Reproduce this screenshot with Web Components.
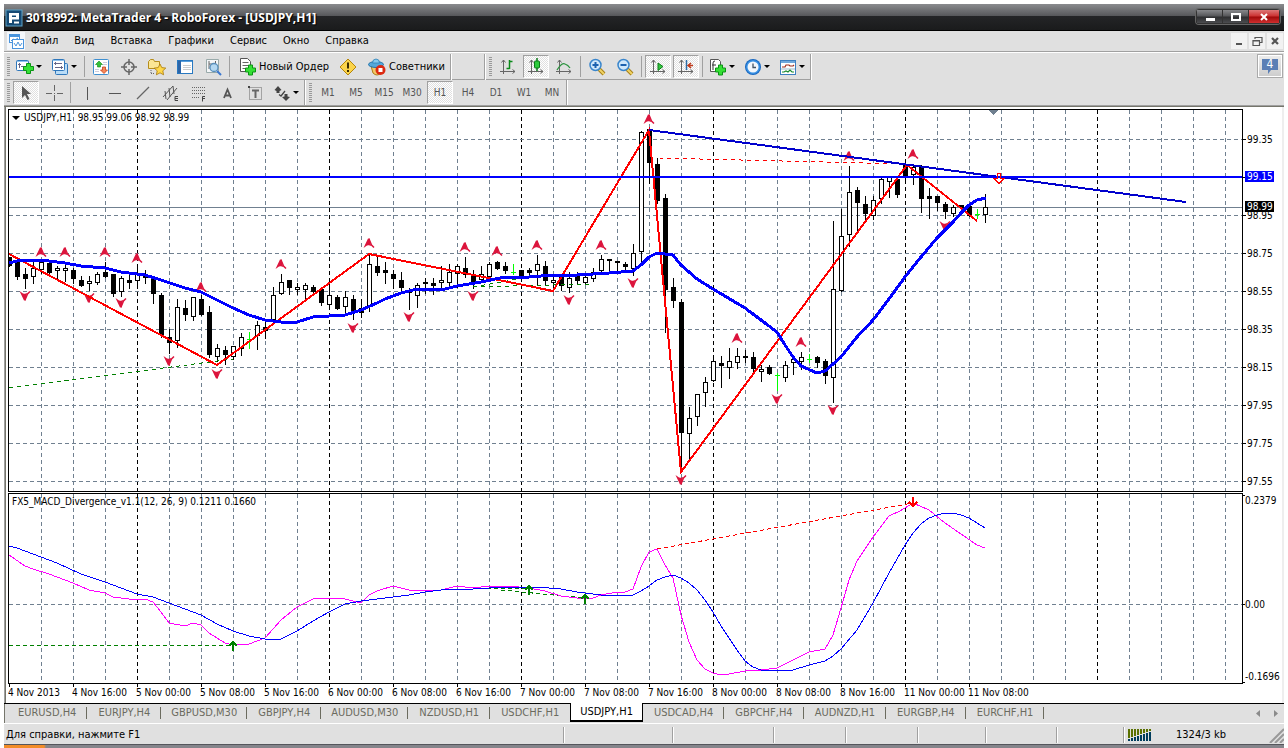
<!DOCTYPE html>
<html lang="ru">
<head>
<meta charset="utf-8">
<title>3018992: MetaTrader 4 - RoboForex - [USDJPY,H1]</title>
<style>
  html, body { margin: 0; height: 100%; background: #fff; }
  body { font: 11px/14px "DejaVu Sans Condensed", "DejaVu Sans", Tahoma, sans-serif; color: #000; }
</style>
</head>
<body>
<mt-window>
  <mt-titlebar slot="title">3018992: MetaTrader 4 - RoboForex - [USDJPY,H1]</mt-titlebar>
  <mt-menubar slot="menu"></mt-menubar>
  <mt-toolbars slot="tools"></mt-toolbars>
  <mt-chart slot="chart"></mt-chart>
  <mt-tabs slot="tabs"></mt-tabs>
  <mt-status slot="status">Для справки, нажмите F1</mt-status>
</mt-window>

<script>
const define = (name, render, ready) => customElements.define(name, class extends HTMLElement {
  connectedCallback() {
    if (this.shadowRoot) return;
    const root = this.attachShadow({ mode: 'open' });
    root.innerHTML = render(this);
    if (ready) ready(root, this);
  }
});

const BTN = `button { font: inherit; color: inherit; background: none; border: 0; padding: 0; margin: 0; box-sizing: border-box; }`;

/* ---------- icons, 18x18 ---------- */
const plus = (x, y) => `<path d="M${x + 3} ${y}h4v3h3v4h-3v3h-4v-3h-3v-4h3z" fill="#35e035" stroke="#0a9414"/>`;
const axes = `<path d="M4.500 2v14M1 13.500h15M2.500 4.500l2-2.500 2 2.500M13.500 11.500l2.500 2-2.500 2" fill="none" stroke="#666"/>`;
const lens = s => `<path d="M11 11l5 5" stroke="#a8821a" stroke-width="4"/><path d="M11 11l5 5" stroke="#f0d264" stroke-width="2"/>
  <circle cx="7.500" cy="7" r="5.500" fill="#cfe8fb" stroke="#3a86cc" stroke-width="1.500"/><path d="${s}" stroke="#1c62b0" stroke-width="2"/>`;
const ICONS = {
  app: `<rect x="1" y="1" width="16" height="16" fill="#164a74" stroke="#5fa3c8"/><path d="M4 4h10v6.500H7V14H4z" fill="#fff"/><path d="M7 6.500h4v1.500H7z" fill="#164a74"/><path d="M9 13.500h5" stroke="#fff" stroke-width="2"/>`,
  doc: `<rect width="18" height="18" fill="#f4f7fb"/><rect x="2.500" y="2.500" width="10" height="8" fill="#fff" stroke="#4a94dc"/><path d="M3 4h10" stroke="#4a94dc" stroke-width="2"/><path d="M4 9l2-2 2 1 3-2" fill="none" stroke="#4a94dc"/><rect x="5.500" y="7.500" width="11" height="9" fill="#fff" stroke="#4a94dc"/><path d="M7 11l2 3 2-4 2 4 2-3" fill="none" stroke="#4a94dc"/>`,
  newchart: `<rect x=".5" y="2.500" width="12" height="10" rx="1" fill="#fff" stroke="#2f77bb"/><path d="M1 3.500h11" stroke="#8fc1ec"/><path d="M3.500 5v5M2 6.500h3M5 8.500h5" stroke="#668"/>${plus(7.500, 5.500)}`,
  profiles: `<rect x="4.500" y="5.500" width="12" height="11" rx="1" fill="#b9dcf7" stroke="#2f77bb"/><rect x="1.500" y="1.500" width="12" height="11" rx="1" fill="#fff" stroke="#2f77bb"/><path d="M2 2.500h11" stroke="#8fc1ec"/><path d="M4.500 4v3M3 5.500h8M10.500 8v3M4 9.500h8" stroke="#668" fill="none"/>`,
  market: `<rect x="1.500" y="1.500" width="15" height="15" rx="1" fill="#fff" stroke="#3f8fd0"/><path d="M11 4.500h4M11 6.500h4M3 11.500h4M3 13.500h4" stroke="#ccd"/><path d="M7 3l3.500 3.500H8.500V9h-3V6.500H3.500z" fill="#35c03a" stroke="#0c8a14" stroke-width=".6"/><path d="M12 15.500l-3.500-3.500h2V9h3v3h2z" fill="#f58a5a" stroke="#c8401a" stroke-width=".8"/>`,
  cross: `<circle cx="9" cy="9" r="5" fill="none" stroke="#666" stroke-width="1.500"/><path d="M9 1v6M9 11v6M1 9h6M11 9h6" stroke="#666" stroke-width="1.500"/>`,
  favs: `<path d="M.5 3.500l2-2h3l1 2h5v7H.5z" fill="#fbe694" stroke="#b58d1c"/><path d="M3 12v4M3 15.500h3" stroke="#666" stroke-dasharray="1 1" fill="none"/><path d="M12 6l1.800 3.600 4 .5-3 2.700.8 4-3.600-2-3.600 2 .8-4-3-2.700 4-.5z" fill="#ffd84a" stroke="#a87808" stroke-width=".8"/>`,
  navigator: `<rect x="1.500" y="2.500" width="15" height="13" fill="#fff" stroke="#2878c0"/><path d="M2 3.500h14" stroke="#5aa0dc"/><rect x="2" y="3" width="3" height="12" fill="#2c65a8"/><path d="M7 7.500h8M7 9.500h8M7 11.500h8" stroke="#ccc"/>`,
  tester: `<path d="M2.500 1.500h12v13h-12z" fill="#f4f6f8" stroke="#9aa"/><path d="M5 3v8M11.500 3v5M5 6h6" stroke="#666"/><circle cx="10" cy="9.500" r="4" fill="#b4d8f2" stroke="#5a90bc" stroke-width="1.300"/><path d="M13 13l4 4" stroke="#3c78d0" stroke-width="2"/>`,
  order: `<path d="M2.500 .500h7l3 3v10h-10z" fill="#fff" stroke="#555"/><path d="M4.500 4.500h6M4.500 7.500h6M4.500 10.500h3" stroke="#666"/>${plus(7.500, 7)}`,
  warn: `<path d="M9 1l8 8-8 8-8-8z" fill="#fbd44a" stroke="#b5860c"/><path d="M9 4.500v6M9 12v2" stroke="#3c2c00" stroke-width="2"/>`,
  experts: `<path d="M3 8h12l-2 7q-4 4-8 0z" fill="#f3c766" stroke="#ad7d18"/><ellipse cx="8" cy="6.500" rx="7.500" ry="3" fill="#55a8da" stroke="#2372a8"/><path d="M4.500 5q0-4 3.500-4t3.500 4z" fill="#86caee" stroke="#2f80b5" stroke-width=".8"/><circle cx="12.500" cy="12" r="5" fill="#dc2a12"/><rect x="10.500" y="10" width="4" height="4" fill="#fff"/>`,
  bars: `${axes}<path d="M10.500 2v9M7.500 10.500h3M10.500 3.500h3" stroke="#0b8a1a" stroke-width="1.500"/>`,
  candles: `${axes}<path d="M10 0v13" stroke="#0b7a18" stroke-width="1.500"/><rect x="7.500" y="3" width="5" height="7" rx="1" fill="#2dcc3c" stroke="#0b7a18"/>`,
  line: `${axes}<path d="M2 12q5-8 8-6 3 1 5 4" fill="none" stroke="#2d9440" stroke-width="1.300"/>`,
  zoomin: lens('M4.500 7h6M7.500 4v6'),
  zoomout: lens('M4.500 7h6'),
  scroll: `${axes}<path d="M9 5l5 3.500-5 4z" fill="#34c840" stroke="#0b7a18"/>`,
  shift: `${axes}<path d="M9.500 2v10" stroke="#2b6ca8" stroke-width="1.500"/><path d="M16 7.500h-4M14 5l-3 2.500 3 2.500" fill="none" stroke="#c0391b" stroke-width="1.500"/>`,
  indicator: `<path d="M1.500 1.500h8l2 2v10h-10z" fill="#fff" stroke="#555"/><path d="M4 12V5q0-2 2-2M3 7h4" stroke="#333" fill="none"/>${plus(6.500, 7)}`,
  clock: `<circle cx="9" cy="9" r="8" fill="#1767c0"/><circle cx="9" cy="9" r="7" fill="#3a92e4"/><circle cx="9" cy="9" r="5.500" fill="#f2f7fc"/><path d="M9 5.500V9.500h3" fill="none" stroke="#456" stroke-width="1.300"/>`,
  template: `<rect x="1.500" y="2.500" width="15" height="14" fill="#fff" stroke="#3d7fc0"/><path d="M2 4h14" stroke="#6ea8dc" stroke-width="2"/><path d="M3 9h3l1-2h3l1 1h3l1-1" fill="none" stroke="#a03020" stroke-width="1.200"/><path d="M2 11h14" stroke="#9bc"/><path d="M3 14h2l2-1 2 1 2-2 2 2h2" fill="none" stroke="#1c8c30" stroke-width="1.200"/>`,
  cursor: `<path d="M5 2v12l3-3 2.500 5 2-1-2.500-5h4z" fill="#555"/>`,
  thin: `<path d="M9.500 1v6M9.500 11v6M1 9.500h6M12 9.500h6" stroke="#666"/><path d="M9 9h1v1h-1z" fill="#666"/>`,
  vline: `<path d="M9.500 3v13" stroke="#555"/>`,
  hline: `<path d="M3 9.500h12" stroke="#555"/>`,
  tline: `<path d="M3 15L15 3" stroke="#666" stroke-width="1.300"/>`,
  channel: `<path d="M1 13L11 2M5 16L15 4M3 7l1 8M7 4l1 9M11 2l1 8" fill="none" stroke="#555"/><path d="M16 12.500h-3v4h3M13 14.500h3" fill="none" stroke="#444"/>`,
  fibo: `<path d="M2 3.500h14M2 6.500h14M2 9.500h14M2 13.500h8" stroke="#666" stroke-dasharray="1 1"/><path d="M15 12.500h-2.500v5M12 14.500h3" fill="none" stroke="#444"/>`,
  letter: `<path d="M6 14l3.500-8.500 3.500 8.500M7.500 11.500h4" fill="none" stroke="#555" stroke-width="1.800"/>`,
  label: `<rect x="3.500" y="3.500" width="12" height="12" fill="none" stroke="#666" stroke-dasharray="1 1"/><path d="M6 6.500h7M9.500 6v8" stroke="#666" stroke-width="2"/><path d="M2 2h2v2H2z" fill="#444"/>`,
  arrows: `<path d="M5 2l3.500 4L6.500 7v2h-3V7L1.500 6z" fill="#444"/><path d="M6 10.500l2 1.500 4-5" fill="none" stroke="#444" stroke-width="1.300"/><path d="M13 17l-4-4 2.500-.5V10h3v2.500L17 13z" fill="#444"/>`,
  chat: `<path d="M1 2h16v11H10l-3 4v-4H1z" fill="#5b7fb5"/>`
};
const icon = n => `<svg width="18" height="18" viewBox="0 0 18 18" aria-hidden="true">${ICONS[n]}</svg>`;

/* ---------- window frame ---------- */
define('mt-window', () => `
<style>
  :host { display: flex; flex-direction: column; min-height: 100vh; box-sizing: border-box; padding: 4px 4px 0; }
  .tools { border-bottom: 1px solid #75756b; }
  .chart { flex: 1; display: flex; min-height: 0; }
  .desk { height: 3px; background: linear-gradient(90deg, #f28c28 40px, #85858b 42px); border-top: 1px solid #55565c; }
  ::slotted(mt-chart) { flex: 1; }
</style>
<slot name="title"></slot><slot name="menu"></slot>
<div class="tools"><slot name="tools"></slot></div>
<div class="chart"><slot name="chart"></slot></div>
<slot name="tabs"></slot><slot name="status"></slot><div class="desk"></div>`);

define('mt-titlebar', () => `
<style>
  ${BTN}
  :host { display: flex; align-items: center; height: 27px; box-sizing: border-box; padding: 0 4px 0 1px;
    background: linear-gradient(#8a8b8e 0, #56575a 12px, #242527 12px, #1a1b1c 26px, #000 26px); color: #fff;
    font: bold 12px/16px "Open Sans", "Noto Sans", sans-serif; }
  svg { flex: none; }
  h1 { flex: 1; margin: 0 0 0 3px; font: inherit; text-shadow: 1px 1px 1px #000; white-space: nowrap; }
  .ctl { display: flex; border: 1px solid #333; border-radius: 3px; box-shadow: 0 0 0 1px #666; margin-bottom: 2px; }
  .ctl button { width: 26px; height: 13px; border-right: 1px solid #333; background: linear-gradient(#88898c, #56575a 6px, #2d2e30 7px, #4c4d50); display: grid; place-items: center; }
  .ctl .x { width: 30px; border: 0; background: linear-gradient(#d77, #c33 6px, #a00a0a 7px, #d03030); }
</style>
${icon('app')}<h1><slot></slot></h1>
<div class="ctl">
 <button aria-label="Свернуть"><svg width="12" height="10"><path d="M2 7.500h9" stroke="#fff" stroke-width="3"/></svg></button>
 <button aria-label="Развернуть"><svg width="12" height="10"><path d="M2 2h8v6H2z" fill="none" stroke="#fff" stroke-width="2"/></svg></button>
 <button class="x" aria-label="Закрыть"><svg width="12" height="10"><path d="M3 2l6 6M9 2l-6 6" stroke="#fff" stroke-width="2"/></svg></button>
</div>`);

define('mt-menubar', () => `
<style>
  ${BTN}
  :host { display: flex; align-items: center; height: 20px; background: #e0e0e0; padding: 0 1px 0 3px; }
  nav { display: flex; flex: 1; gap: 16px; margin-left: 6px; }
  .mdi { display: flex; gap: 2px; }
  .mdi button { width: 16px; height: 16px; background: #f2f2f2; display: grid; place-items: center; }
</style>
${icon('doc')}
<nav>${['Файл', 'Вид', 'Вставка', 'Графики', 'Сервис', 'Окно', 'Справка'].map(t => `<button>${t}</button>`).join('')}</nav>
<div class="mdi">
 <button aria-label="Свернуть график"><svg width="12" height="12"><path d="M3 9h6" stroke="#555" stroke-width="2"/></svg></button>
 <button aria-label="Восстановить график"><svg width="12" height="12"><path d="M4 4V2.500h7v5H9M2 5.500h6.500v5H2zM2 6h6" fill="none" stroke="#555" stroke-width="1.200"/></svg></button>
 <button aria-label="Закрыть график"><svg width="12" height="12"><path d="M3 3l6 6M9 3l-6 6" stroke="#555" stroke-width="2.200"/></svg></button>
</div>`);

/* ---------- toolbars ---------- */
define('mt-tool', el => {
  const n = el.getAttribute('icon');
  return `
<style>
  ${BTN}
  :host { display: flex; width: 28px; height: 25px; padding: 1px; box-sizing: border-box; color: #000; }
  :host([tf]) { color: #555; font-size: 10px; }
  :host([menu]) { width: 35px; }
  :host([size="order"]) { width: 102px; }
  :host([size="expert"]) { width: 88px; }
  button { flex: 1; min-width: 0; display: flex; align-items: center; justify-content: center; white-space: nowrap; border: 1px solid transparent; }
  :host([menu]) button { justify-content: flex-start; padding-left: 2px; }
  :host([size]) button { justify-content: flex-start; padding-left: 4px; gap: 3px; }
  :host([on]) button { border-color: #a0a0a0 #fff #fff #a0a0a0; background: repeating-conic-gradient(#fff 0 25%, #e0e0e0 0 50%) 0 0 / 2px 2px; }
  svg { flex: none; }
  i { margin-left: 2px; border: 3px solid transparent; border-top-color: #000; border-bottom: 0; }
</style>
<button aria-label="${el.getAttribute('label') || n || el.textContent}">${n ? icon(n) : ''}<slot></slot>${el.hasAttribute('menu') ? '<i></i>' : ''}</button>`;
});

const tools = s => s.split(' ').map(t => {
  if (t === '|') return '<b></b>';
  const on = t.endsWith('*'), menu = t.endsWith('+');
  return `<mt-tool icon="${t.replace(/[*+]/, '')}"${on ? ' on' : ''}${menu ? ' menu' : ''}></mt-tool>`;
}).join('');

define('mt-toolbars', () => `
<style>
  ${BTN}
  :host { display: grid; grid-template-columns: 1fr auto; background: #e0e0e0; border-top: 1px solid #a0a0a0; border-bottom: 1px solid #a0a0a0; box-shadow: inset 0 1px #fff; padding-top: 2px; }
  .rows { display: flex; flex-direction: column; }
  .row { display: flex; height: 26px; }
  .row + .row { height: 25px; }
  .group { display: flex; box-sizing: border-box; border-right: 1px solid #a0a0a0; box-shadow: 1px 0 #fff; margin-right: 1px; }
  .lined { border-bottom: 1px solid #a0a0a0; }
  .rest { width: 33px; }
  .group::before { content: ""; width: 3px; margin: 3px 2px 3px 3px; background: repeating-linear-gradient(#999 0 1px, #e0e0e0 1px 2px); }
  .rest::before { display: none; }
  b { width: 1px; margin: 2px 2px; background: #a0a0a0; }
  .chat { position: relative; width: 26px; height: 24px; margin: 0 1px; border: 1px solid #aaa; outline: 1px solid #fff; outline-offset: -2px; background: linear-gradient(#eee, #ccc); display: grid; place-items: center; }
  .chat span { position: absolute; top: 2px; color: #fff; font: 12px/14px "DejaVu Sans Condensed", sans-serif; }
</style>
<div class="rows">
 <div class="row">
  <div class="group lined">${tools('newchart+ profiles+ | market cross favs navigator tester |')}<mt-tool icon="order" size="order" label="Новый Ордер">Новый Ордер</mt-tool><mt-tool icon="warn"></mt-tool><mt-tool icon="experts" size="expert" label="Советники">Советники</mt-tool></div>
  <div class="group lined rest"></div>
  <div class="group lined">${tools('bars candles* line | zoomin zoomout | scroll* shift* | indicator+ clock+ template+')}</div>
 </div>
 <div class="row">
  <div class="group">${tools('cursor* thin | vline hline tline channel fibo letter label arrows+')}</div>
  <div class="group">${['M1', 'M5', 'M15', 'M30', 'H1', 'H4', 'D1', 'W1', 'MN'].map(t => `<mt-tool tf${t === 'H1' ? ' on' : ''}>${t}</mt-tool>`).join('')}</div>
 </div>
</div>
<button class="chat" aria-label="Сообщения">${icon('chat')}<span>4</span></button>`);

/* ---------- chart data: y pixels of high, body top, body bottom, low; kind ---------- */
const CANDLES = `257 257 266 266 f|260 261 277 279 f|268 274 279 288 f|262 268 277 283 h|260 262 270 273 h|262 263 273 274 f|266 268 271 280 h|265 268 271 281 h|268 270 279 283 f|276 280 286 286 f|276 281 284 290 h|272 274 283 284 h|262 272 277 277 f|274 274 294 296 f|276 278 292 296 h|275 280 283 288 f|265 274 281 285 h|270 276 277 283 f|277 277 294 303 f|293 295 335 337 f|329 337 343 353 f|299 307 341 347 h|300 308 315 320 f|297 297 317 320 h|295 299 315 315 f|306 312 355 357 f|344 348 357 361 h|346 350 355 364 f|346 346 357 359 h|333 337 349 355 h|332 339 339 349 g|321 325 336 349 h|319 327 331 338 f|287 295 320 321 h|274 282 294 294 h|280 280 288 294 f|283 287 290 294 h|283 285 290 298 h|285 287 292 293 f|287 289 303 305 f|283 295 305 305 h|295 297 309 309 f|291 297 307 315 h|295 299 311 319 f|299 308 313 317 f|255 264 306 311 h|257 266 273 275 f|262 270 273 283 f|270 274 279 288 f|272 280 288 290 f|288 291 293 309 f|283 285 296 307 h|278 282 284 293 f|278 283 286 294 f|266 280 283 288 h|264 272 283 286 h|264 266 274 287 h|257 268 275 277 f|270 274 283 288 f|266 274 280 281 h|262 264 277 277 h|261 262 269 269 f|262 266 271 273 f|264 272 272 275 g|270 270 276 276 f|268 270 273 277 f|255 264 271 284 h|261 266 281 285 f|277 280 283 291 h|276 277 286 290 f|272 278 288 292 h|272 274 281 283 f|274 277 283 284 h|268 272 279 281 h|255 259 271 273 h|259 259 261 272 h|261 261 263 273 f|262 264 267 272 f|244 253 269 275 h|131 132 252 262 h|129 129 163 183 f|158 164 201 203 f|194 198 290 332 f|278 287 301 307 f|299 302 433 470 f|407 418 434 458 h|394 394 417 425 h|377 382 393 406 h|355 361 381 381 h|356 363 366 387 f|348 361 368 378 h|348 356 363 368 h|350 356 358 362 f|352 357 369 372 f|365 369 372 381 h|365 367 374 374 f|373 375 375 391 g|361 365 378 381 h|355 359 363 374 h|352 357 362 369 h|354 359 359 363 g|356 357 363 367 f|359 361 376 383 f|221 289 378 402 h|209 236 291 291 h|166 192 235 246 h|187 190 203 230 f|196 204 214 219 f|196 200 216 219 h|178 179 199 203 h|177 177 182 197 h|179 179 195 197 f|162 164 176 179 f|165 167 175 184 h|165 167 199 212 f|188 196 199 218 f|196 196 203 210 f|202 204 212 218 f|205 207 214 216 h|205 205 208 209 f|205 206 216 216 f|209 214 214 219 g|194 207 215 222 h`;

const candles = CANDLES.split('|').map((c, k) => {
  const [h, t, b, l, kind] = c.split(' '), x = 9 + 8 * k;
  const H = +h, T = +t, B = +b, L = +l;
  if (kind === 'g') return `<path d="M${x}.500 ${H}V${L}M${x - 2} ${T}.500h5" stroke="#0f0"/>`;
  return `<path d="M${x}.500 ${H}V${L + 1}" stroke="#000"/><rect x="${x - 1.5}" y="${T + .5}" width="4" height="${Math.max(B - T - 1, 1)}" fill="${kind === 'h' ? '#fff' : '#000'}" stroke="#000"/>`;
}).join('');

const UP = '41,252 65,252 105,252 137,258 201,287 281,264 369,243 465,247 497,251 537,245 601,245 649,119 737,338 801,342 849,156 913,154';
const DOWN = '25,296 89,298 121,303 169,361 217,374 353,328 409,317 473,296 569,300 633,283 681,480 777,399 833,410 945,226';
const fractal = (p, dir) => {
  const [x, y] = p.split(',');
  return `<g transform="translate(${x} ${y}) scale(1 ${dir})" shape-rendering="auto"><path d="M-5.500 5L-1-4.500H1V2L-2 2.500Z" fill="#dc143c"/><path d="M0-4L2.500 2L5 4.500M.500 2H2.500" fill="none" stroke="#dc143c" stroke-width="1.500"/></g>`;
};
const fractals = UP.split(' ').map(p => fractal(p, 1)).join('') + DOWN.split(' ').map(p => fractal(p, -1)).join('');

const vgrid = (y1, y2) => {
  let s = '';
  for (let x = 41; x < 1240; x += 32) s += `<path d="M${x}.500 ${y1}V${y2}" stroke="${(x - 137) % 192 ? '#708090' : '#000'}" stroke-dasharray="4 3"/>`;
  return s;
};
let hgrid = '';
for (let y = 139; y < 490; y += 38) hgrid += `<path d="M9 ${y}.500H1242" stroke="#708090" stroke-dasharray="4 3"/>`;

const MA = '9,263 21,260 41,260 65,263 81,266 105,268 121,272 145,275 161,280 185,288 201,292 217,300 233,308 249,315 265,320 281,322 297,322 313,317 329,316 345,315 361,310 377,303 385,299 401,293 417,289 445,289 457,286 481,282 505,277 529,277 553,275 577,275 609,273 633,271 641,265 649,257 657,253 673,255 681,265 697,279 713,289 745,308 769,326 777,332 785,345 793,357 801,366 817,373 825,371 841,357 857,337 873,320 889,299 905,277 921,257 937,238 953,222 961,213 969,205 977,200 986,198';
const MACD = '9,555 25,566 33,569 49,574 73,583 89,590 105,593 113,597 129,599 145,599 153,602 161,612 169,623 185,626 193,623 201,625 209,633 225,643 233,645 249,644 265,638 281,620 297,607 313,599 329,598 345,599 361,603 369,595 377,591 393,586 409,590 441,590 457,586 473,588 489,586 509,586 529,588 545,591 561,596 577,598 593,598 601,595 617,592 625,592 633,589 641,567 649,552 657,549 665,565 673,578 681,615 689,642 697,660 705,669 713,673 721,675 729,674 745,671 761,670 777,668 793,660 809,652 825,649 833,635 841,608 849,580 857,561 873,537 889,516 900,511 913,503 929,510 945,523 961,534 977,545 985,548';
const SIGNAL = '9,546 17,548 57,563 81,574 105,582 121,588 137,594 153,597 169,603 201,615 217,624 233,631 249,636 265,639 281,639 297,631 313,621 329,612 345,604 361,601 377,599 409,595 425,592 441,590 473,589 505,587 537,587 561,589 577,592 601,595 633,595 641,591 649,586 657,580 665,577 673,575 681,578 689,583 697,590 705,600 713,612 721,626 729,638 737,650 745,661 753,667 761,670 777,671 793,670 809,665 825,661 833,656 841,649 857,630 873,603 889,573 905,545 913,533 921,524 929,518 937,515 945,513 953,513 961,515 969,518 977,523 985,528';
const arrow = (x, y, c, d) => `<g transform="translate(${x} ${y}) scale(1 ${d})"><path d="M0 5V-3M-4 0L0-4L4 0" fill="none" stroke="${c}" stroke-width="2"/></g>`;

const DATES = ['4 Nov 2013', '4 Nov 16:00', '5 Nov 00:00', '5 Nov 08:00', '5 Nov 16:00', '6 Nov 00:00', '6 Nov 08:00', '6 Nov 16:00', '7 Nov 00:00', '7 Nov 08:00', '7 Nov 16:00', '8 Nov 00:00', '8 Nov 08:00', '8 Nov 16:00', '11 Nov 00:00', '11 Nov 08:00'];
const prices = ['99.35', '', '98.95', '98.75', '98.55', '98.35', '98.15', '97.95', '97.75', '97.55'];

define('mt-chart', () => `
<style>
  :host { display: flex; flex-direction: column; box-sizing: border-box; background: #fff; border-left: 1px solid #a0a0a0; border-right: 2px solid #eee; box-shadow: inset 1px 0 #75756b; padding: 2px 0 0 3px;
    font: 10px/12px "DejaVu Sans Condensed", "DejaVu Sans", sans-serif; }
  .panes { flex: 1; display: grid; grid-template: 1fr 191px / 1fr 39px; row-gap: 1px; min-height: 0; }
  .pane { position: relative; border: 1px solid #000; min-width: 0; overflow: hidden; }
  .pane svg, .axis svg { position: absolute; inset: 0; width: 100%; height: 100%; shape-rendering: crispEdges; overflow: hidden; }
  .pane h2 { position: absolute; left: 3px; top: 2px; margin: 0; font: inherit; display: flex; gap: 4px; align-items: center; white-space: nowrap; }
  .pane i { border: 4px solid transparent; border-top-color: #000; border-bottom: 0; }
  .axis { position: relative; }
  .axis svg { overflow: visible; }
  .tag { fill: #fff; }
  .dates { display: flex; height: 19px; overflow: hidden; }
  .dates span { width: 64px; flex: none; white-space: nowrap; position: relative; padding-top: 3px; box-sizing: border-box; }
  .dates span::before { content: ""; position: absolute; left: 1px; top: 0; width: 1px; height: 3px; background: #000; }
</style>
<div class="panes">
 <div class="pane">
  <svg><g transform="translate(-9 -110)">
   ${vgrid(110, 492)}${hgrid}
   <path d="M9 207.500H1242" stroke="#708090"/>
   ${candles}
   <path d="M9 388L233 359M473 287L529 277M473 287L593 284" stroke="#008000" stroke-dasharray="4 4" fill="none"/>
   <path d="M659 158L905 164" stroke="#f00" stroke-dasharray="4 4"/>
   ${fractals}
   <polyline points="9,254 217,365 369,254 553,291 649,130 681,472 907,165 977,221" fill="none" stroke="#f00" stroke-width="2"/>
   <polyline points="${MA}" fill="none" stroke="#00f" stroke-width="3"/>
   <path d="M649 130L1186 202" stroke="#0000cd" stroke-width="2"/>
   <path d="M9 177H1242" stroke="#00f" stroke-width="2"/>
   <path d="M997.500 173.500h3v5h3.500l-5 5-5-5h3.500z" fill="none" stroke="#f00"/>
   <path d="M988 110h11l-5.500 5z" fill="#708090"/>
  </g></svg>
  <h2><i></i><span>USDJPY,H1&nbsp; 98.95 99.06 98.92 98.99</span></h2>
 </div>
 <div class="axis"><svg><g transform="translate(-1243 -109)">
   ${prices.map((p, i) => `<path d="M1243 ${139 + 38 * i}.500h3" stroke="#000"/><text x="1247" y="${143 + 38 * i}">${p}</text>`).join('')}
   <rect x="1245" y="171" width="29" height="11" fill="#00f"/><text class="tag" x="1247" y="180">99.15</text>
   <rect x="1245" y="201" width="29" height="11" fill="#000"/><text class="tag" x="1247" y="210">98.99</text>
 </g></svg></div>
 <div class="pane">
  <svg><g transform="translate(-9 -494)">
   ${vgrid(494, 684)}<path d="M9 604.500H1242" stroke="#708090" stroke-dasharray="4 3"/>
   <path d="M9 645.500H233M473 588L529 589M501 590L585 598" stroke="#008000" stroke-dasharray="4 3" fill="none"/>
   <path d="M657 549L913 503" stroke="#f00" stroke-dasharray="4 3"/>
   <polyline points="${MACD}" fill="none" stroke="#f0f"/>
   <polyline points="${SIGNAL}" fill="none" stroke="#00f"/>
   ${arrow(233, 646, '#008000', 1)}${arrow(529, 590, '#008000', 1)}${arrow(585, 599, '#008000', 1)}${arrow(913, 502, '#f00', -1)}
  </g></svg>
  <h2>FX5_MACD_Divergence_v1.1(12, 26, 9) 0.1211 0.1660</h2>
 </div>
 <div class="axis"><svg><g transform="translate(-1243 -493)">
   <path d="M1243 495.500h2M1243 604.500h2M1243 682.500h2" stroke="#000"/>
   <text x="1245" y="504">0.2379</text><text x="1245" y="608">0.00</text><text x="1245" y="680">-0.1696</text>
 </g></svg></div>
</div>
<div class="dates">${DATES.map(d => `<span>${d}</span>`).join('')}</div>`);

/* ---------- bottom bars ---------- */
const TABS = ['EURUSD,H4', 'EURJPY,H4', 'GBPUSD,M30', 'GBPJPY,H4', 'AUDUSD,M30', 'NZDUSD,H1', 'USDCHF,H1', 'USDJPY,H1', 'USDCAD,H4', 'GBPCHF,H4', 'AUDNZD,H1', 'EURGBP,H4', 'EURCHF,H1'];
define('mt-tabs', () => `
<style>
  ${BTN}
  :host { display: flex; height: 20px; box-sizing: border-box; background: #e0e0e0; border-top: 1px solid #000; color: #6b6b5f; padding-left: 3px; box-shadow: inset 1px 0 #75756b; }
  button { padding: 0 11px 1px; position: relative; white-space: nowrap; }
  button.long { padding: 0 10px 1px; }
  button::after { content: ""; position: absolute; right: 0; top: 3px; width: 1px; height: 12px; background: #6b6b5f; }
  button.on { background: #fff; color: #000; border: 1px solid #000; border-top: 0; border-bottom-width: 2px; padding: 0 9px; margin: -1px 0 1px; }
  .on::after, .pre::after { display: none; }
  .nav { margin-left: auto; display: flex; align-items: center; gap: 14px; padding-right: 6px; }
</style>
${TABS.map((t, i) => `<button class="${i === 7 ? 'on' : i === 6 ? 'pre' : t.length > 9 ? 'long' : ''}">${t}</button>`).join('')}
<div class="nav"><svg width="4" height="7"><path d="M4 0v7L0 3.500z" fill="#8a8a8a"/></svg><svg width="4" height="7"><path d="M0 0v7l4-3.500z" fill="#8a8a8a"/></svg></div>`);

define('mt-status', () => `
<style>
  :host { display: flex; height: 20px; background: #e0e0e0; border-top: 1px solid #fff; line-height: 22px; }
  .msg { flex: 1; padding-left: 2px; white-space: nowrap; }
  .cell { box-sizing: border-box; border-left: 1px solid #a0a0a0; box-shadow: inset 1px 0 #fff; margin: 3px 0 1px; flex: none; line-height: 16px; }
  .net { display: flex; width: 161px; padding-left: 4px; }
  .net span { margin-left: 24px; }
  .net .grip { margin-left: auto; }
</style>
<div class="msg"><slot></slot></div>
${[109, 101, 72, 72, 68, 71, 67].map(w => `<div class="cell" style="width:${w}px"></div>`).join('')}
<div class="cell net"><svg width="24" height="14" shape-rendering="crispEdges">${[...Array(8)].map((_, i) => `<path d="M${i * 3 + 1} 2V${11 - i}" stroke="#5a7000" stroke-width="2"/><path d="M${i * 3 + 1} ${12 - i}V14" stroke="#003c5c" stroke-width="2"/>`).join('')}</svg><span>1324/3 kb</span>
<svg class="grip" width="16" height="16"><path d="M2 16L16 2M7 16l9-9M12 16l4-4" stroke="#999" stroke-width="2"/></svg></div>`);
</script>
</body>
</html>
